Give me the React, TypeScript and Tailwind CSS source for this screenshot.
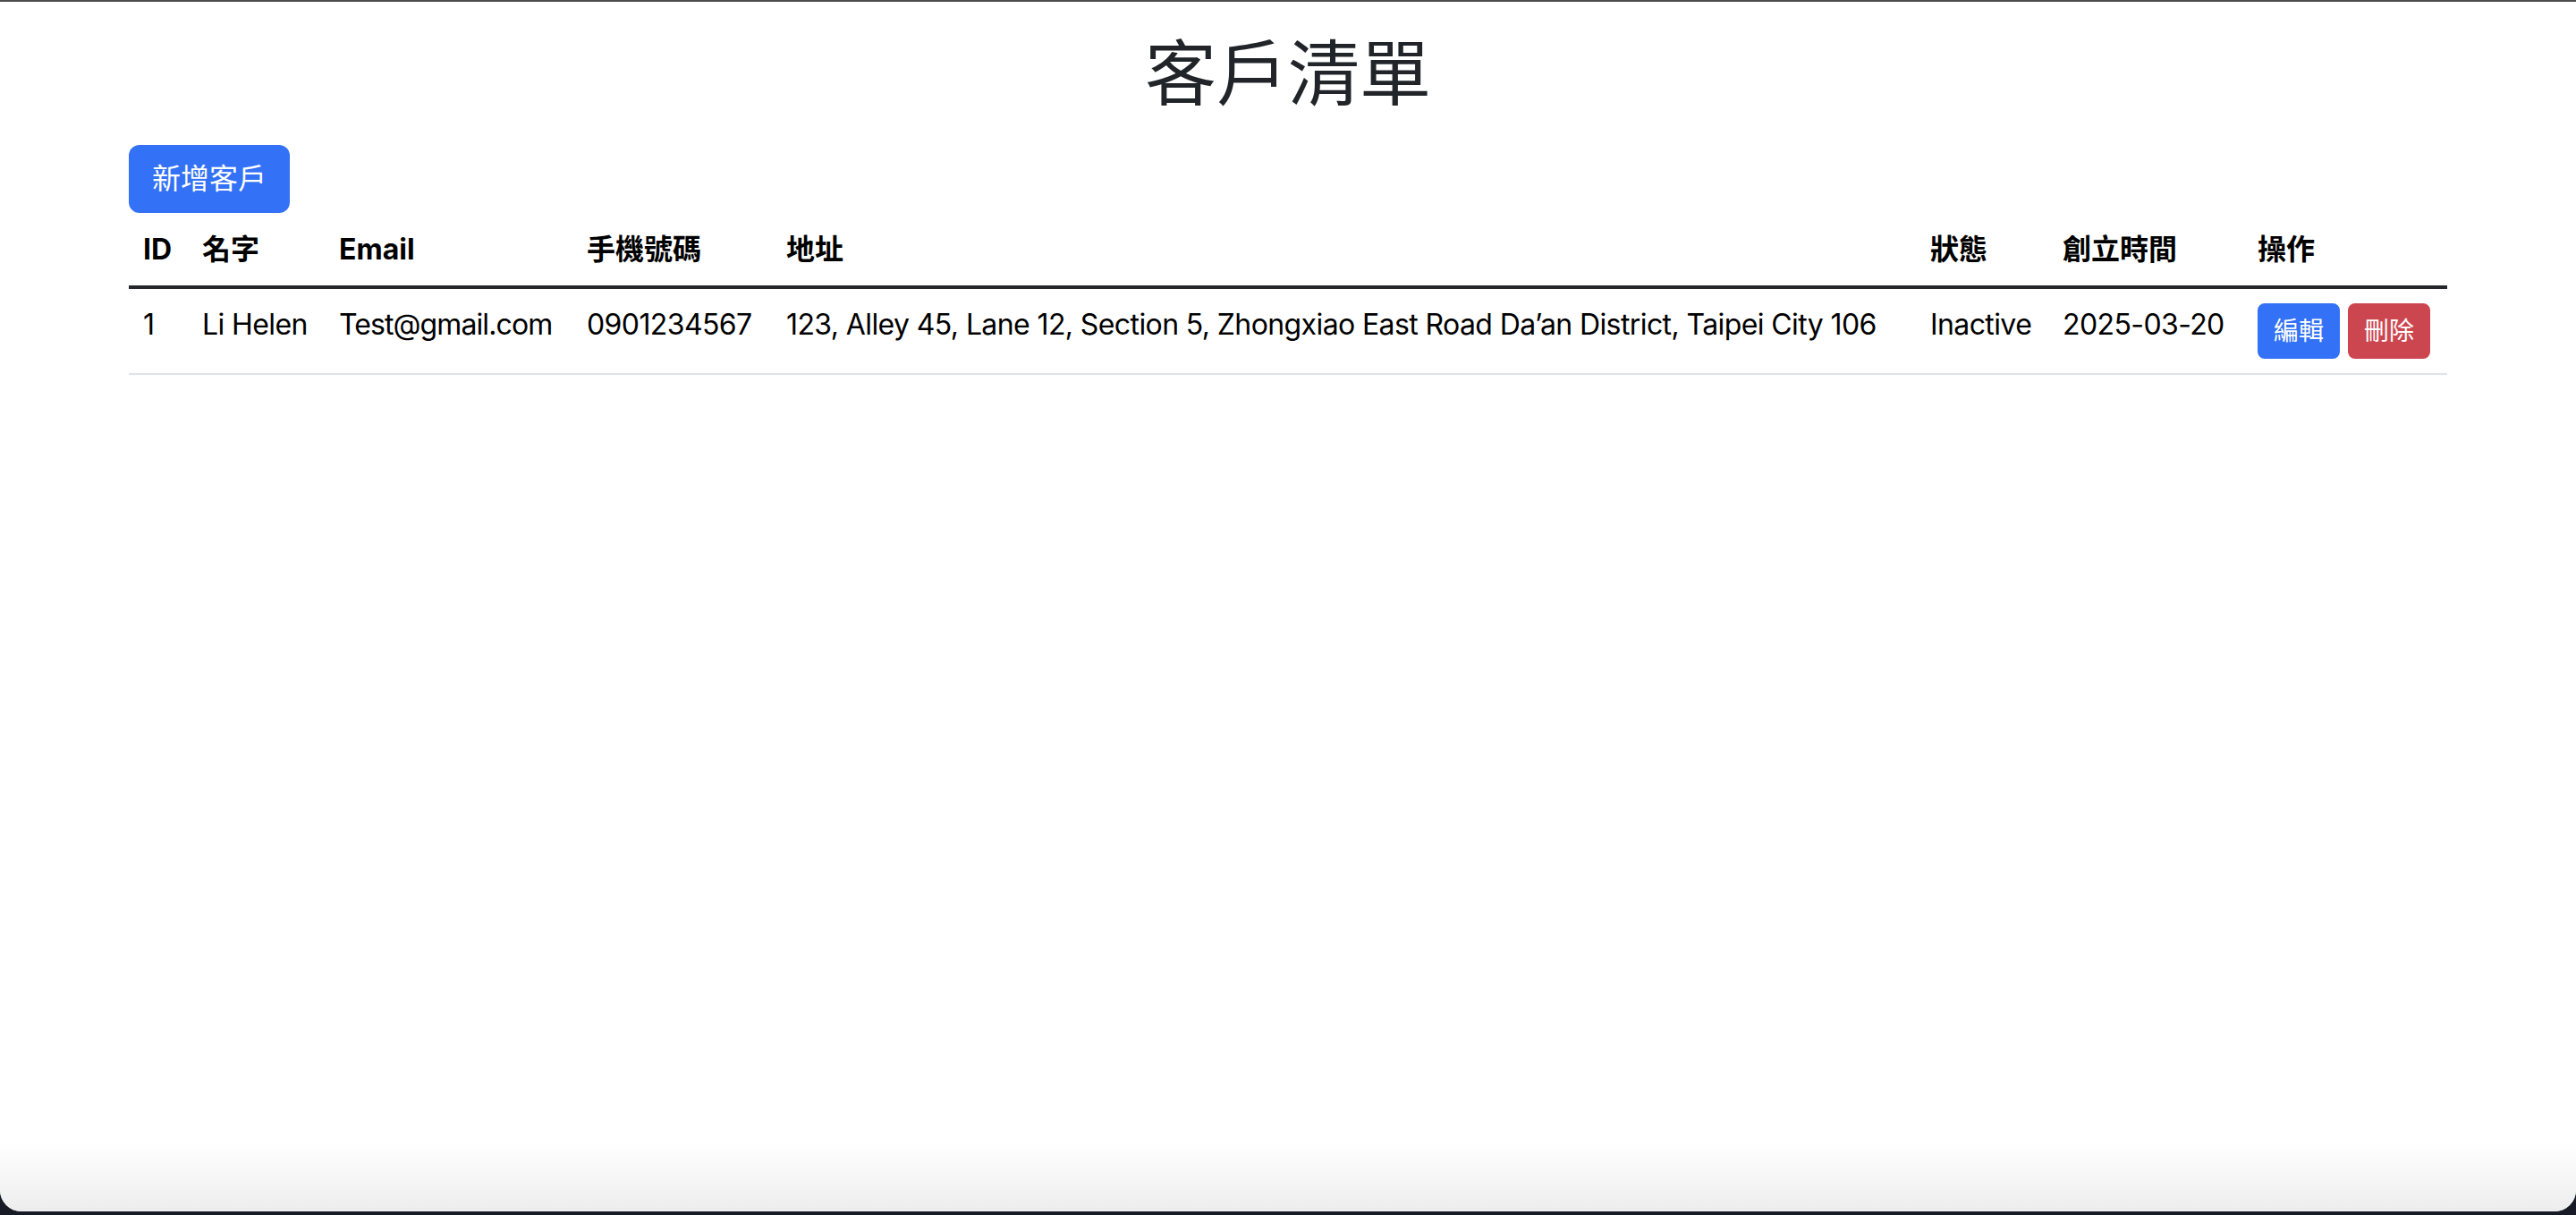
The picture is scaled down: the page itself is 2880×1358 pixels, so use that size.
import React from 'react';

interface Customer {
  id: number;
  name: string;
  email: string;
  phone: string;
  address: string;
  status: string;
  createdAt: string;
}

const CUSTOMERS: Customer[] = [
  {
    id: 1,
    name: 'Li Helen',
    email: 'Test@gmail.com',
    phone: '0901234567',
    address: '123, Alley 45, Lane 12, Section 5, Zhongxiao East Road Da’an District, Taipei City 106',
    status: 'Inactive',
    createdAt: '2025-03-20',
  },
];

// column widths measured off the list, left to right
const COLUMNS: { label: string; width: string }[] = [
  { label: 'ID', width: 'w-[66px]' },
  { label: '名字', width: 'w-[153px]' },
  { label: 'Email', width: 'w-[277px]' },
  { label: '手機號碼', width: 'w-[223px]' },
  { label: '地址', width: 'w-[1279px]' },
  { label: '狀態', width: 'w-[148px]' },
  { label: '創立時間', width: 'w-[218px]' },
  { label: '操作', width: 'w-[228px]' },
];

function CustomerRow({ c }: { c: Customer }) {
  const td =
    'px-[16px] pt-[16px] pb-[16px] align-top leading-[48px] whitespace-nowrap tracking-[-0.6px] border-b-2 border-[#dfe2e6]';
  return (
    <tr>
      <td className={td}>{c.id}</td>
      <td className={td}>{c.name}</td>
      <td className={`${td} tracking-[-0.9px]`}>{c.email}</td>
      <td className={td}>{c.phone}</td>
      <td className={td}>{c.address}</td>
      <td className={td}>{c.status}</td>
      <td className={td}>{c.createdAt}</td>
      <td className={td}>
        <div className="flex gap-[9px]">
          <button className="h-[62px] px-[16px] border-2 border-[#3371f6] rounded-[8px] bg-[#3371f6] text-white text-[28px] leading-[42px] tracking-normal">
            編輯
          </button>
          <button className="h-[62px] px-[16px] border-2 border-[#cc4650] rounded-[8px] bg-[#cc4650] text-white text-[28px] leading-[42px] tracking-normal">
            刪除
          </button>
        </div>
      </td>
    </tr>
  );
}

export default function App() {
  return (
    <div className="relative w-full h-[1358px] bg-[#161b26] overflow-hidden font-[Inter,'Noto_Sans_CJK_TC',sans-serif]">
      <div className="relative h-[1354px] bg-white border-t-2 border-[#4d4d4d] rounded-b-[24px] overflow-hidden">
        <div className="px-[144px] pt-[32px]">
          <h1 className="text-center text-[80px] leading-[96px] font-normal text-[#212529] mb-[32px]">
            客戶清單
          </h1>
          <button className="h-[76px] w-[180px] rounded-[12px] bg-[#3371f6] text-white text-[32px] leading-[48px]">
            新增客戶
          </button>
          <table className="table-fixed w-[2592px] border-collapse text-[32px] text-black">
            <thead>
              <tr>
                {COLUMNS.map((col) => (
                  <th
                    key={col.label}
                    className={`${col.width} text-left font-bold px-[16px] pt-[17px] pb-[16px] leading-[48px] border-b-4 border-[#24272b]`}
                  >
                    {col.label}
                  </th>
                ))}
              </tr>
            </thead>
            <tbody>
              {CUSTOMERS.map((c) => (
                <CustomerRow key={c.id} c={c} />
              ))}
            </tbody>
          </table>
        </div>
        {/* window bottom fade */}
        <div className="absolute left-0 right-0 bottom-0 h-[76px] bg-gradient-to-b from-white to-[#ededed] pointer-events-none" />
      </div>
    </div>
  );
}
